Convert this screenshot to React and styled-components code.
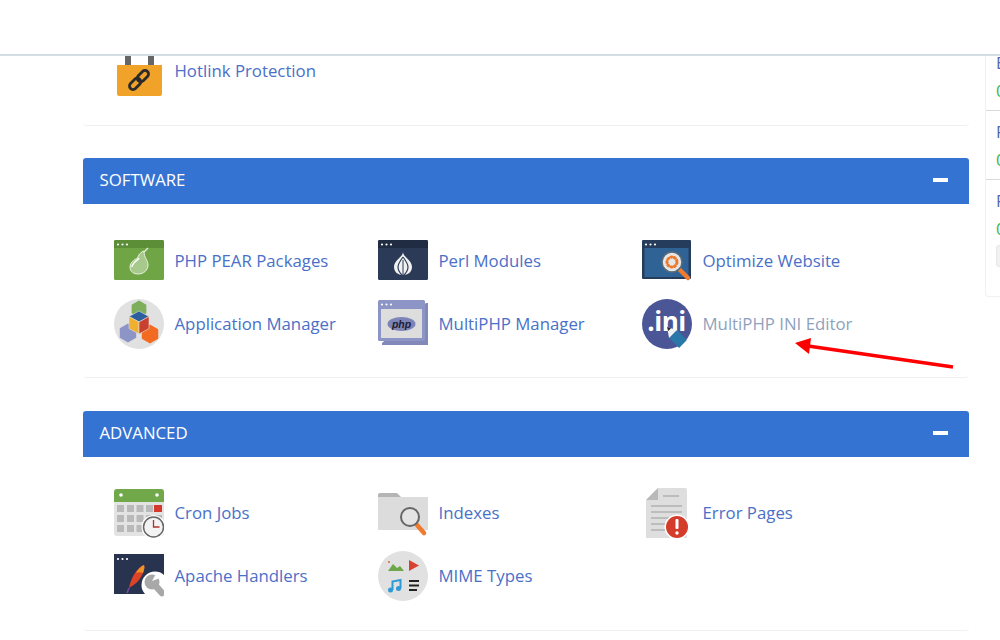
import React from 'react'
import styled, { createGlobalStyle } from 'styled-components'

const Global = createGlobalStyle`
  html, body { margin: 0; padding: 0; height: 100%; overflow: hidden; background: #fff; }
  body { font-family: "Open Sans", "Liberation Sans", sans-serif; }
`

const TopBar = styled.header`
  position: fixed;
  top: 0;
  left: 0;
  right: 0;
  height: 54px;
  background: #fff;
  border-bottom: 2px solid #d3dde4;
  z-index: 5;
`

const Page = styled.div`
  display: flex;
  align-items: flex-start;
  width: 1300px;
  height: 640px;
  overflow: hidden;
  position: relative;
`

const Main = styled.main`
  width: 886px;
  margin-left: 83px;
  flex-shrink: 0;
  padding-top: 46px;
`

const Panel = styled.section`
  margin-bottom: 33px;
  border-bottom: 1px solid #f0f0f0;
  border-radius: 4px;

  &:first-child {
    margin-bottom: 32px;
  }
`

const PanelHead = styled.div`
  display: flex;
  align-items: center;
  justify-content: space-between;
  box-sizing: border-box;
  height: 46px;
  padding: 0 21px 3px 16.5px;
  background: #3573d3;
  border-radius: 3px 3px 0 0;
  color: #fff;
  font-size: 16.8px;
`

const Minus = styled.span`
  width: 15px;
  height: 4px;
  background: #fff;
`

const Grid = styled.div`
  display: grid;
  grid-template-columns: repeat(3, 264px);
  row-gap: 13px;
  padding: ${p => p.$top}px 0 ${p => p.$bottom}px 31px;
`

const Item = styled.a`
  display: flex;
  align-items: center;
  gap: 10.5px;
  height: 50px;
  font-size: 16.8px;
  color: ${p => (p.$muted ? '#8fa2bd' : '#4a70c8')};
  white-space: nowrap;
`

const Label = styled.span`
  margin-bottom: 2px;
`

const IconBox = styled.svg`
  width: 50px;
  height: 50px;
  flex-shrink: 0;
  display: block;
`

const Side = styled.aside`
  width: 300px;
  margin: 46px 0 0 16px;
  flex-shrink: 0;
  border-left: 1px solid #f1f1f1;
  border-bottom: 1px solid #f1f1f1;
  border-radius: 0 0 0 4px;
  height: 250px;
`

const Stat = styled.div`
  height: ${p => p.$h}px;
  padding: ${p => p.$top}px 0 0 10px;
  box-sizing: border-box;
  border-bottom: ${p => (p.$last ? 'none' : '1px solid #d9d9d9')};
`

const StatName = styled.div`
  font-size: 16.8px;
  line-height: 20px;
  color: #5266ad;
`

const StatValue = styled.div`
  font-size: 16.8px;
  line-height: 20px;
  margin-top: 8px;
  color: #3db34f;
`

const Progress = styled.div`
  width: 200px;
  height: 20px;
  margin-top: 6px;
  background: #f1f1f1;
  border: 1px solid #e6e6e6;
  border-radius: 3px;
`

const Arrow = styled.svg`
  position: absolute;
  left: 790px;
  top: 335px;
  width: 170px;
  height: 40px;
`

const Dots = ({ y = 3.5, x = 3, c = '#fff' }) => (
  <g fill={c}>
    <circle cx={x} cy={y} r="1.1" />
    <circle cx={x + 4.5} cy={y} r="1.1" />
    <circle cx={x + 9} cy={y} r="1.1" />
  </g>
)

const HotlinkIcon = () => (
  <IconBox viewBox="0 0 50 50">
    <rect x="11" y="5" width="6" height="16" fill="#666" />
    <rect x="34" y="5" width="6" height="16" fill="#666" />
    <path d="M3 19h45v29a2 2 0 0 1-2 2H5a2 2 0 0 1-2-2z" fill="#f0a328" />
    <g fill="none" stroke="#2b2b2b" strokeWidth="2.8" transform="rotate(-45 25 34)">
      <rect x="13" y="30.5" width="13" height="7" rx="3.5" />
      <rect x="24" y="30.5" width="13" height="7" rx="3.5" />
    </g>
  </IconBox>
)

const PearIcon = () => (
  <IconBox viewBox="0 0 50 50">
    <rect y="4" width="50" height="40" rx="1.5" fill="#6fa544" />
    <path d="M0 5.500A1.500 1.500 0 0 1 1.500 4h47A1.500 1.500 0 0 1 50 5.500V12H0z" fill="#5b8e37" />
    <g transform="translate(0 4)"><Dots x={4} y={4.5} /></g>
    <path d="M30 15c-3 1-5 3-6 6-1 2-8 4-8 10 0 5 4 7 8 7 6 0 10-4 10-9 0-5-4-7-4-14z" fill="#a8c98c" stroke="#e8f0de" strokeWidth="1" />
    <path d="M18 31c0-4 5-6 7-9" fill="none" stroke="#fff" strokeWidth="1.500" />
    <path d="M30 16l4-4" stroke="#e8f0de" strokeWidth="1.200" />
  </IconBox>
)

const Hex = ({ x, y, r, fill }) => {
  const h = r * 0.866
  return <polygon points={`${x},${y - r} ${x + h},${y - r / 2} ${x + h},${y + r / 2} ${x},${y + r} ${x - h},${y + r / 2} ${x - h},${y - r / 2}`} fill={fill} />
}

const AppIcon = () => (
  <IconBox viewBox="0 0 50 50">
    <circle cx="25" cy="25" r="25" fill="#e1e1e1" />
    <Hex x={25} y={10} r={8.5} fill="#7cae5b" />
    <Hex x={14} y={34} r={9.5} fill="#8d95c7" />
    <Hex x={36} y={35} r={9.5} fill="#f26b21" />
    <g stroke="#e1e1e1" strokeWidth=".6">
      <polygon points="25,12 35,17.500 25,23 15,17.500" fill="#2d5f9e" />
      <polygon points="15,17.500 25,23 25,35 15,29.500" fill="#efb030" />
      <polygon points="35,17.500 25,23 25,35 35,29.500" fill="#c9402f" />
    </g>
  </IconBox>
)

const PerlIcon = () => (
  <IconBox viewBox="0 0 50 50">
    <rect y="4" width="50" height="40" rx="1.500" fill="#2b3b57" />
    <path d="M0 5.500A1.500 1.500 0 0 1 1.500 4h47A1.500 1.500 0 0 1 50 5.500V12H0z" fill="#202c42" />
    <g transform="translate(0 4)"><Dots x={4} y={4.500} /></g>
    <path d="M25 16c0 5 9 8 9 15 0 5-4 8-9 8s-9-3-9-8c0-7 9-10 9-15z" fill="#f1f1f1" />
    <path d="M25 21c-3 4-5 7-5 10 0 4 2 6 4 8M25 21c3 4 5 7 5 10 0 4-2 6-4 8" fill="none" stroke="#2b3b57" strokeWidth="1.200" />
    <path d="M25 24v15" stroke="#2b3b57" strokeWidth="1" />
  </IconBox>
)

const PhpIcon = () => (
  <IconBox viewBox="0 0 50 50">
    <path d="M48 4h2v42H4v-2z" fill="#8288b8" />
    <rect y="0" x="0" width="47" height="41" rx="1.500" fill="#8d94c6" transform="translate(0 1)" />
    <rect x="3" y="10" width="41" height="29" fill="#dddddd" />
    <Dots x={4} y={5.500} />
    <ellipse cx="23.500" cy="25" rx="14" ry="7" fill="#7d84b8" />
    <text x="23.500" y="28.500" textAnchor="middle" fontFamily="Liberation Sans, sans-serif" fontStyle="italic" fontWeight="700" fontSize="10.500" fill="#1e2030">php</text>
  </IconBox>
)

const OptimizeIcon = () => (
  <IconBox viewBox="0 0 50 50">
    <rect y="4" width="49" height="39" rx="1" fill="#263c5c" />
    <rect x="2.500" y="12" width="44" height="29" fill="#2f6396" />
    <g transform="translate(0 4)"><Dots x={4} y={4.500} /></g>
    <path d="M38 34l8 8" stroke="#f07a2e" strokeWidth="4.500" strokeLinecap="round" />
    <circle cx="30" cy="26" r="10" fill="#e6e6e6" stroke="#5a6a78" strokeWidth="1.500" />
    <circle cx="30" cy="26" r="5" fill="none" stroke="#ec7a2d" strokeWidth="3" strokeDasharray="2.500 1" />
    <circle cx="30" cy="26" r="5" fill="none" stroke="#ec7a2d" strokeWidth="2" />
  </IconBox>
)

const IniIcon = () => (
  <IconBox viewBox="0 0 50 50">
    <circle cx="25" cy="25" r="25" fill="#4b5697" />
    <text x="24.500" y="32" textAnchor="middle" fontFamily="Open Sans, sans-serif" fontWeight="700" fontSize="26" letterSpacing="-.5" fill="#fff">.ini</text>
    <polygon points="34.900,31.100 27.100,38.900 37.100,48.900 44.900,41.100" fill="#2a78a8" />
    <polygon points="25,28 34.900,31.100 27.100,38.900" fill="#f2f2f2" />
    <polygon points="25,28 29,29.300 26.300,32" fill="#222" />
  </IconBox>
)

const CronIcon = () => (
  <IconBox viewBox="0 0 50 50">
    <path d="M3 1h44a3 3 0 0 1 3 3v41a3 3 0 0 1-3 3H3a3 3 0 0 1-3-3V4a3 3 0 0 1 3-3z" fill="#e3e3e3" />
    <path d="M3 1h44a3 3 0 0 1 3 3v10H0V4a3 3 0 0 1 3-3z" fill="#71a94a" />
    <circle cx="7" cy="7" r="1.800" fill="#fff" />
    <circle cx="43" cy="7" r="1.800" fill="#fff" />
    <g fill="#b9b9b9">
      {[17, 27, 37].map(y => [3, 13, 22.500, 32].map(x => <rect key={`${x}-${y}`} x={x} y={y} width="7" height="7" />))}
      <rect x="40" y="27" width="8" height="4" />
    </g>
    <rect x="40" y="17" width="8" height="7" fill="#d5382c" />
    <circle cx="39.500" cy="39" r="12" fill="#fff" />
    <circle cx="39.500" cy="39" r="10" fill="#f3f3f3" stroke="#666" strokeWidth="1.500" />
    <path d="M39.500 32v7h6" fill="none" stroke="#b0322c" strokeWidth="1.300" />
  </IconBox>
)

const ApacheIcon = () => (
  <IconBox viewBox="0 0 50 50">
    <rect y="3" width="50" height="40" fill="#28334f" />
    <g transform="translate(0 3)"><Dots x={4} y={5} /></g>
    <path d="M30 14c-7 3-13 12-15 23 5-3 11-7 14-15 1-3 2-6 1-8z" fill="#dc4327" />
    <path d="M30 14c-3 1-6 4-8 8 3-1 5-1 7 0 1-3 2-6 1-8z" fill="#ee9127" />
    <path d="M15 37l-2 5" stroke="#7a4aa0" strokeWidth="1.500" />
    <circle cx="41" cy="34" r="13.500" fill="#fff" />
    <path d="M39 32l9 10" stroke="#a8a8a8" strokeWidth="6.500" strokeLinecap="round" />
    <circle cx="38" cy="31" r="7.500" fill="#a8a8a8" />
    <polygon points="38,30 43,21 49,26" fill="#fff" />
  </IconBox>
)

const IndexesIcon = () => (
  <IconBox viewBox="0 0 50 50">
    <path d="M0 7a2 2 0 0 1 2-2h17l4 4H0z" fill="#b5b5b5" />
    <rect y="9" width="50" height="33" fill="#dcdcdc" />
    <path d="M39 37l7 8" stroke="#f07a2e" strokeWidth="4.500" strokeLinecap="round" />
    <circle cx="32" cy="29" r="9" fill="#e4e4e4" stroke="#666" strokeWidth="2" />
  </IconBox>
)

const MimeIcon = () => (
  <IconBox viewBox="0 0 50 50">
    <circle cx="25" cy="25" r="25" fill="#e1e1e1" />
    <path d="M10 20l5-7 4 4 3-2 4 5z" fill="#6ea64a" />
    <circle cx="11" cy="11" r="1" fill="#d9653a" />
    <path d="M31 9l10 5.500-10 5.500z" fill="#d8402f" />
    <path d="M14.500 39V30.500l8-1.500V37.500" fill="none" stroke="#2e9ad6" strokeWidth="2" />
    <circle cx="12.500" cy="39" r="2.500" fill="#2e9ad6" />
    <circle cx="20.500" cy="37.500" r="2.500" fill="#2e9ad6" />
    <path d="M31 30h10M31 34.500h10M31 39h8" stroke="#222" strokeWidth="2" />
  </IconBox>
)

const ErrorIcon = () => (
  <IconBox viewBox="0 0 50 50">
    <path d="M16 0h27a2 2 0 0 1 2 2v48H4V12z" fill="#dedede" />
    <path d="M16 0v12H4z" fill="#b9b9b9" />
    <path d="M21 8h16M9 18h31M9 24h31M9 30h24M9 36h20M9 42h16" stroke="#bcbcbc" strokeWidth="2" />
    <circle cx="35" cy="39" r="12.500" fill="#fff" />
    <circle cx="35" cy="39" r="11" fill="#d43c2c" />
    <rect x="33.500" y="31" width="3" height="10" rx="1" fill="#fff" />
    <circle cx="35" cy="45" r="1.700" fill="#fff" />
  </IconBox>
)

const software = [
  ['PHP PEAR Packages', PearIcon],
  ['Perl Modules', PerlIcon],
  ['Optimize Website', OptimizeIcon],
  ['Application Manager', AppIcon],
  ['MultiPHP Manager', PhpIcon],
  ['MultiPHP INI Editor', IniIcon, true],
]

const advanced = [
  ['Cron Jobs', CronIcon],
  ['Indexes', IndexesIcon],
  ['Error Pages', ErrorIcon],
  ['Apache Handlers', ApacheIcon],
  ['MIME Types', MimeIcon],
]

const Items = ({ list }) =>
  list.map(([name, Icon, muted]) => (
    <Item key={name} $muted={muted}>
      <Icon />
      <Label>{name}</Label>
    </Item>
  ))

export default function App() {
  return (
    <>
      <Global />
      <TopBar />
      <Page>
        <Main>
          <Panel>
            <Grid $top={0} $bottom={29}>
              <Items list={[['Hotlink Protection', HotlinkIcon]]} />
            </Grid>
          </Panel>
          <Panel>
            <PanelHead>SOFTWARE<Minus /></PanelHead>
            <Grid $top={32} $bottom={28}><Items list={software} /></Grid>
          </Panel>
          <Panel>
            <PanelHead>ADVANCED<Minus /></PanelHead>
            <Grid $top={31} $bottom={29}><Items list={advanced} /></Grid>
          </Panel>
        </Main>
        <Side>
          <Stat $h={65} $top={7}>
            <StatName>Email Accounts</StatName>
            <StatValue>0 / ∞</StatValue>
          </Stat>
          <Stat $h={69} $top={11}>
            <StatName>Forwarders</StatName>
            <StatValue>0 / ∞</StatValue>
          </Stat>
          <Stat $h={100} $top={11} $last>
            <StatName>FTP Accounts</StatName>
            <StatValue>0 / ∞</StatValue>
            <Progress />
          </Stat>
        </Side>
        <Arrow viewBox="0 0 170 40">
          <path d="M163 32L18 11" stroke="#f00" strokeWidth="3.500" fill="none" />
          <path d="M5 8l16-5-2 16z" fill="#f00" />
        </Arrow>
      </Page>
    </>
  )
}
